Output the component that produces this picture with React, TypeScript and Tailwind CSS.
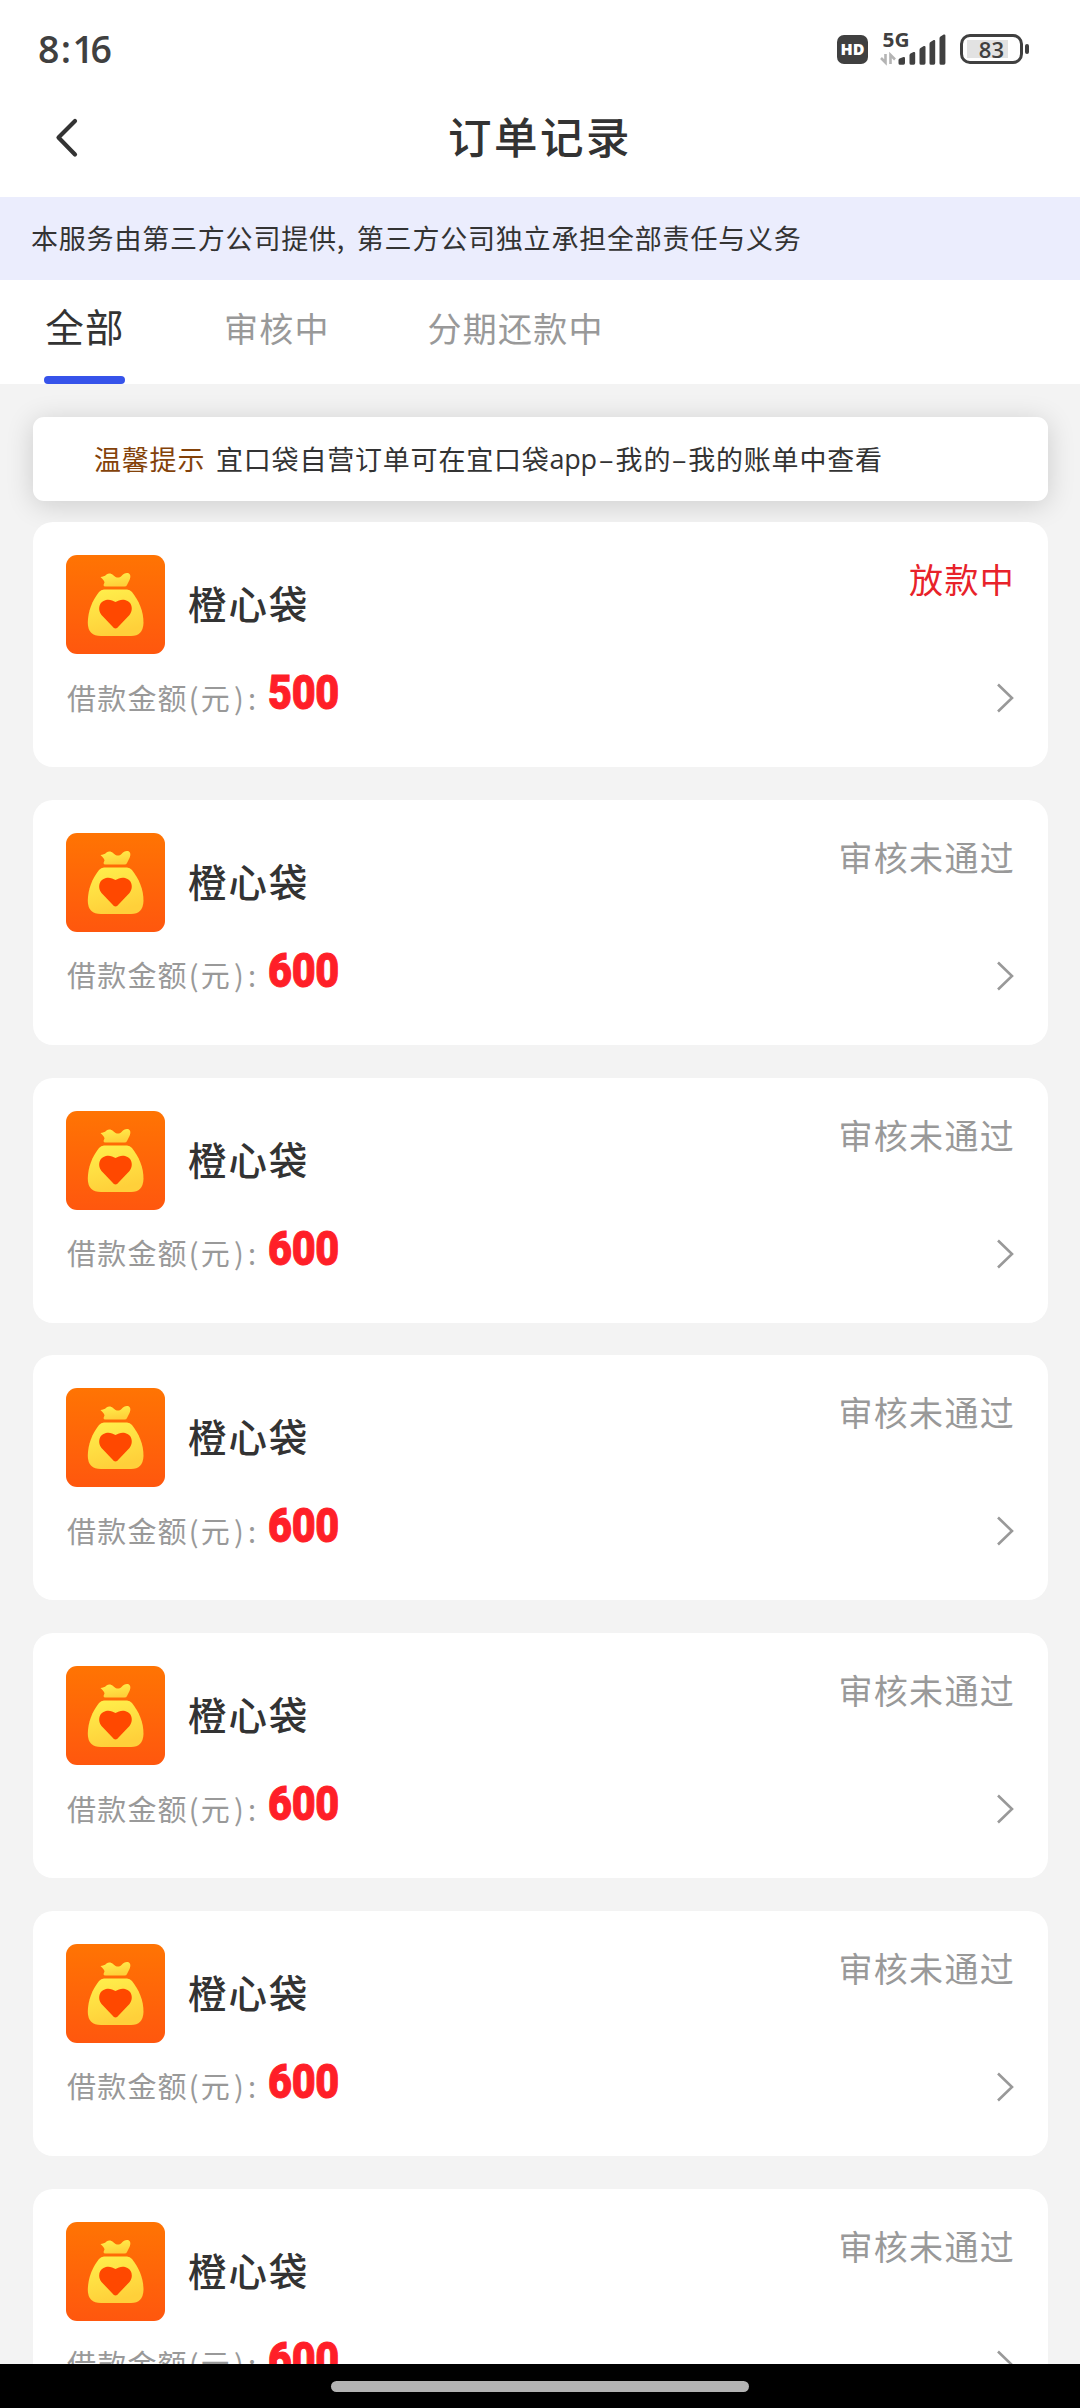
type Order = {
  id: number;
  name: string;
  amount: number;
  status: string;
  active?: boolean;
};

const orders: Order[] = [
  { id: 1, name: "橙心袋", amount: 500, status: "放款中", active: true },
  { id: 2, name: "橙心袋", amount: 600, status: "审核未通过" },
  { id: 3, name: "橙心袋", amount: 600, status: "审核未通过" },
  { id: 4, name: "橙心袋", amount: 600, status: "审核未通过" },
  { id: 5, name: "橙心袋", amount: 600, status: "审核未通过" },
  { id: 6, name: "橙心袋", amount: 600, status: "审核未通过" },
  { id: 7, name: "橙心袋", amount: 600, status: "审核未通过" },
];

function SignalIcon() {
  return (
    <svg width="68" height="46" viewBox="880 26 68 46" fill="#404040">
      <text
        x="882.5"
        y="46.5"
        fontSize="19"
        fontWeight="700"
        textLength="27"
        lengthAdjust="spacingAndGlyphs"
        style={{ fontFamily: "'Open Sans', sans-serif" }}
      >
        5G
      </text>
      <path d="M885.5 54v8.5l-4.5-4.5M890.5 64V55l4.5 4.5" fill="none" stroke="#b4b4b4" strokeWidth="2.6" />
      <path d="M898.5 60q0-1 1-1.500l4-1.500q1.500-.3 1.500 1v5q0 1.700-1.500 1.700h-3.500q-1.500 0-1.500-1.500z" />
      <path d="M909.5 55.500q0-1.500 1-2l3-1.500q1.700-.4 1.700 1v10q0 1.700-1.500 1.700h-2.700q-1.500 0-1.500-1.500z" />
      <path d="M919.5 50q0-1.500 1-2l3.300-2q1.700-.4 1.700 1v16q0 1.700-1.500 1.700h-3q-1.500 0-1.500-1.500z" />
      <path d="M929.5 44q0-1.500 1-2l3.200-2q1.500-.4 1.500 1v22q0 1.700-1.500 1.700h-2.700q-1.500 0-1.500-1.500z" />
      <path d="M939.5 38.500q0-1.500 1-2l3.200-2q1.700-.4 1.700 1v27.500q0 1.700-1.500 1.700h-2.900q-1.500 0-1.500-1.500z" />
    </svg>
  );
}

function StatusBar() {
  return (
    <div className="flex h-[98px] items-center pr-[51px] pl-[38px] text-[#404040]">
      <span className="flex font-['Open_Sans',sans-serif] text-[37.5px] leading-none font-semibold">
        8<span className="w-[13px] text-center">:</span>
        <span className="tracking-[-3.5px]">16</span>
      </span>
      <div className="ml-auto flex items-center">
        <span className="flex h-[29px] w-[31px] items-center justify-center rounded-[7px] bg-[#404040] font-['Open_Sans',sans-serif] text-[16px] leading-none font-extrabold text-white">
          HD
        </span>
        <span className="ml-3">
          <SignalIcon />
        </span>
        <div className="ml-3 flex h-[30px] w-[63px] items-center rounded-[10px] border-[3.5px] border-[#404040] pl-1">
          <span className="flex h-[18px] w-[41px] items-center justify-end bg-[#e2e2e2] pr-1 font-['Open_Sans',sans-serif] text-[22px] leading-none font-semibold">
            83
          </span>
        </div>
        <span className="ml-[2px] h-[10px] w-1 rounded-full bg-[#404040]" />
      </div>
    </div>
  );
}

function MoneyBag() {
  return (
    <svg width="99" height="99" viewBox="0 0 99 99" className="shrink-0 rounded-[11px]">
      <defs>
        <linearGradient id="tile" x1="0" y1="0" x2="0" y2="1">
          <stop offset="0" stopColor="#ff7403" />
          <stop offset="1" stopColor="#ff570e" />
        </linearGradient>
        <linearGradient id="bag" x1="0" y1="0" x2="0.3" y2="1">
          <stop offset="0" stopColor="#fff04c" />
          <stop offset="1" stopColor="#ffd03a" />
        </linearGradient>
      </defs>
      <rect width="99" height="99" fill="url(#tile)" />
      <path
        d="M34.5 22C37 21.5 38.5 21.5 40.5 19.5C42.5 18 45 18 47 20C50 23 53 23.5 55.5 21C57.5 18.5 60.5 17.5 63 18.5C65 20 64.5 23 63.5 25L61 30Q60.5 31.5 58.5 31.5H39.5Q37.5 31.5 37.5 30L38.5 27.5Q38.5 25.5 34.5 22Z"
        fill="url(#bag)"
      />
      <path
        d="M38 34.5H61Q64 34.5 66 37C73 46 77.5 56 77.5 68Q77 81 65 81H35Q22 81 21.800 68C22 56 26 46 33 37Q35 34.5 38 34.5Z"
        fill="url(#bag)"
      />
      <path
        d="M49.5 73.5Q48 73.5 46 71L35.5 60C31.5 55 33 48 37.5 46C42 43.5 46 45 49.5 47C53 45 57 43.5 61.5 46C66 48 67.5 55 63.5 60L53 71Q51 73.5 49.5 73.5Z"
        fill="#ff4800"
      />
    </svg>
  );
}

function OrderCard({ order }: { order: Order }) {
  return (
    <div className="h-[245px] shrink-0 rounded-[20px] bg-white px-[33px] pt-[33px]">
      <div className="flex">
        <MoneyBag />
        <span className="mt-[27px] ml-[23px] text-[38.5px] leading-[40px] font-medium tracking-[1.9px] text-[#333]">
          {order.name}
        </span>
        <span
          className={`mt-[6px] ml-auto text-[34px] leading-[36px] tracking-[1.3px] ${
            order.active ? "text-[#e8222a]" : "text-[#999]"
          }`}
        >
          {order.status}
        </span>
      </div>
      <div className="mt-[21px] flex h-[46px] items-center">
        <span className="-mt-[2px] flex w-[202px] pl-px text-[29px] leading-none tracking-[1.2px] whitespace-nowrap text-[#999]">
          借款金额
          <span className="w-[13px] pl-px">(</span>
          元
          <span className="w-[15px] pl-[3px]">)</span>
          <span className="pl-[2px]">:</span>
        </span>
        <span className="mt-[-10px] inline-block origin-left scale-x-[0.86] font-[Roboto,sans-serif] text-[48px] leading-none font-black tracking-[-0.3px] text-[#ff1f28] [-webkit-text-stroke:1px_#ff1f28]">
          {order.amount}
        </span>
        <svg width="20" height="32" viewBox="0 0 20 32" className="ml-auto" fill="none">
          <path d="M3 2.5L17 16L3 29.5" stroke="#999" strokeWidth="2.6" />
        </svg>
      </div>
    </div>
  );
}

export default function App() {
  return (
    <div className="flex h-[2408px] w-[1080px] flex-col overflow-hidden bg-[#f3f3f3] font-['Noto_Sans_CJK_SC',sans-serif] text-[#333]">
      <header className="bg-white">
        <StatusBar />
        <div className="grid h-[99px] grid-cols-[1fr_auto_1fr] items-start">
          <svg width="25" height="42" viewBox="0 0 25 42" fill="none" className="mt-[19px] ml-[54px]">
            <path d="M21 4L4.5 20.5L21 37.5" stroke="#333" strokeWidth="4.2" strokeLinecap="round" strokeLinejoin="round" />
          </svg>
          <h1 className="mt-[16px] text-[43.5px] leading-[44px] font-medium tracking-[2.5px]">订单记录</h1>
        </div>
      </header>

      <div className="flex h-[83px] shrink-0 items-center bg-[#ebedfd] pl-[31px] text-[27px] tracking-[0.8px] whitespace-nowrap">
        本服务由第三方公司提供<span className="w-[20px]">,</span>第三方公司独立承担全部责任与义务
      </div>

      <nav className="flex h-[104px] shrink-0 items-start bg-white pl-[44px] text-[34px] leading-[40px] tracking-[1.2px] whitespace-nowrap text-[#999]">
        <div className="flex h-full w-[81px] flex-col items-center justify-between">
          <span className="mt-[25px] pl-px text-[38.5px] tracking-[1.3px] text-[#333]">全部</span>
          <span className="h-2 w-full rounded-full bg-[#3653ea]" />
        </div>
        <span className="mt-[28px] ml-[99px]">审核中</span>
        <span className="mt-[28px] ml-[98px]">分期还款中</span>
      </nav>

      <main className="flex min-h-0 flex-1 flex-col overflow-hidden pt-[33px] pr-[32px] pl-[33px]">
        <div className="flex h-[84px] shrink-0 items-center rounded-[11px] bg-white pl-[61px] text-[27px] tracking-[0.8px] whitespace-nowrap shadow-[0_4px_28px_rgba(0,0,0,0.16)]">
          <span className="w-[122px] text-[#844209]">温馨提示</span>
          宜口袋自营订单可在宜口袋
          <span className="w-[48px] font-['Open_Sans',sans-serif] tracking-[-0.3px]">app</span>
          <span className="w-[18px] text-center">–</span>
          我的
          <span className="w-[17px] text-center">–</span>
          我的账单中查看
        </div>
        <div className="relative mt-[21px] flex flex-col gap-[32.8px]">
          {orders.map((order) => (
            <OrderCard key={order.id} order={order} />
          ))}
        </div>
      </main>

      <footer className="relative flex h-[44px] shrink-0 justify-center bg-black pt-[17px]">
        <span className="h-[11px] w-[418px] rounded-full bg-[#b3b3b3]" />
      </footer>
    </div>
  );
}
